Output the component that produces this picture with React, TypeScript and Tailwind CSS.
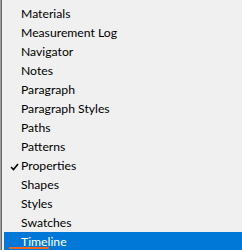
import React from 'react';

const items = [
    'Materials',
    'Measurement Log',
    'Navigator',
    'Notes',
    'Paragraph',
    'Paragraph Styles',
    'Paths',
    'Patterns',
    'Properties',
    'Shapes',
    'Styles',
    'Swatches',
    'Timeline',
];

const checked = 'Properties';
const active = 'Timeline';

const App: React.FC = () => {
    return (
        <div className="w-[242px] h-[250px] overflow-hidden bg-[#f0f0f0] flex" style={{ fontFamily: 'Lato, "Noto Sans", sans-serif' }}>
            <div className="w-px h-full bg-[#a0a0a0]" />
            <div className="w-px h-full bg-[#696969]" />
            <div className="flex-1 pt-[4px] pl-[2px]">
                {items.map((item) => (
                    <div
                        key={item}
                        className={`relative h-[19px] flex items-center text-[12.2px] leading-none ${
                            item === active ? 'bg-[#0078d7] text-white' : 'text-black'
                        }`}
                    >
                        <div className="w-[17px] flex justify-center pl-[3px] pt-[2px]">
                            {item === checked && (
                                <svg width="9" height="8" viewBox="0 0 9 8">
                                    <path d="M1 4 L3.5 6.5 L8 1" fill="none" stroke="#000" strokeWidth="1.6" />
                                </svg>
                            )}
                        </div>
                        <span className="pt-[2px]">{item}</span>
                        {item === active && (
                            <div className="absolute left-[5px] top-[15px] w-[40px] h-[2px] bg-[#f26522]" />
                        )}
                    </div>
                ))}
            </div>
        </div>
    );
};

export default App;
